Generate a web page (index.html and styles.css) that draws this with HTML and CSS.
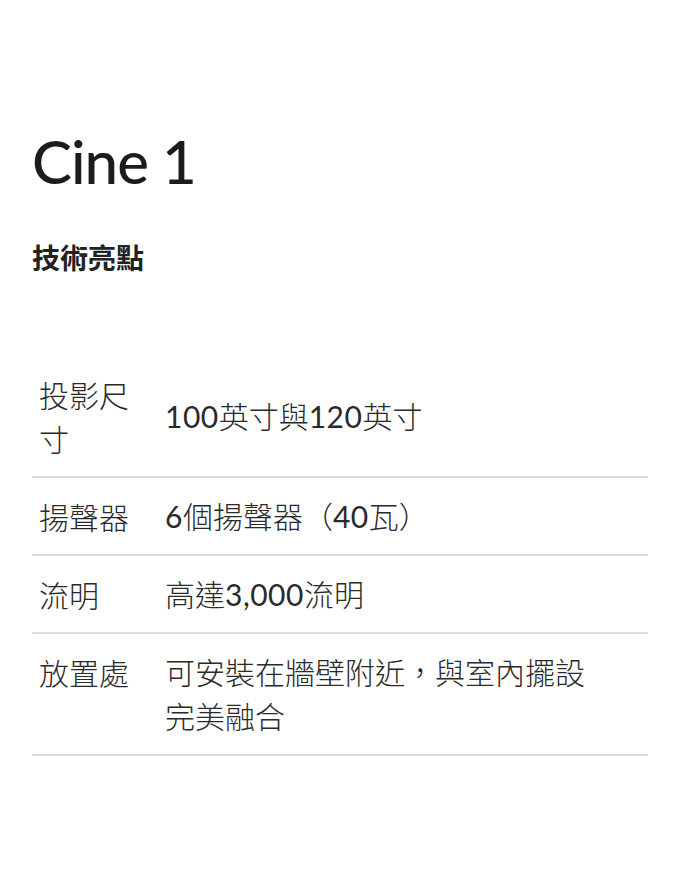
FILE: index.html
```html
<!DOCTYPE html>
<html lang="zh-Hant">
<head>
<meta charset="utf-8">
<title>Cine 1</title>
<link rel="stylesheet" href="styles.css">
</head>
<body>
<main class="page">
  <h1 class="title">Cine 1</h1>
  <h2 class="subtitle">技術亮點</h2>
  <table class="specs">
    <tbody>
      <tr><th>投影尺寸</th><td><span class="num">100</span>英寸與<span class="num">120</span>英寸</td></tr>
      <tr><th>揚聲器</th><td><span class="num">6</span>個揚聲器（<span class="num">40</span>瓦）</td></tr>
      <tr><th>流明</th><td>高達<span class="num">3,000</span>流明</td></tr>
      <tr><th>放置處</th><td>可安裝在牆壁附近，與室內擺設完美融合</td></tr>
    </tbody>
  </table>
</main>
</body>
</html>
```

FILE: styles.css
```css
html, body {
  margin: 0;
  padding: 0;
  background: #fff;
}
body {
  font-family: "Lato", "Noto Sans CJK TC", sans-serif;
  color: #222;
}
.page {
  padding: 123px 32px 0 32px;
}
.title {
  margin: 0;
  font-family: "Lato", sans-serif;
  font-size: 60px;
  font-weight: 500;
  line-height: 76px;
  letter-spacing: -1px;
  color: #1c1c1c;
}
.subtitle {
  margin: 38px 0 0 0;
  font-family: "Noto Sans CJK TC", sans-serif;
  font-size: 28px;
  font-weight: 700;
  line-height: 40px;
  color: #222;
}
.specs {
  margin-top: 79px;
  width: 616px;
  border-collapse: collapse;
}
.specs tr {
  border-bottom: 2px solid #dcdcdc;
}
.specs th, .specs td {
  padding: 16px 7px;
  font-size: 30px;
  font-weight: 300;
  line-height: 44px;
  text-align: left;
  color: #2a2a2a;
}
.specs th {
  width: 112px;
  vertical-align: top;
  font-family: "Noto Sans CJK TC", sans-serif;
}
.specs td {
  padding-right: 34px;
  vertical-align: middle;
  font-family: "Lato", "Noto Sans CJK TC", sans-serif;
}
.num {
  font-weight: 400;
  letter-spacing: 0.5px;
}
```
